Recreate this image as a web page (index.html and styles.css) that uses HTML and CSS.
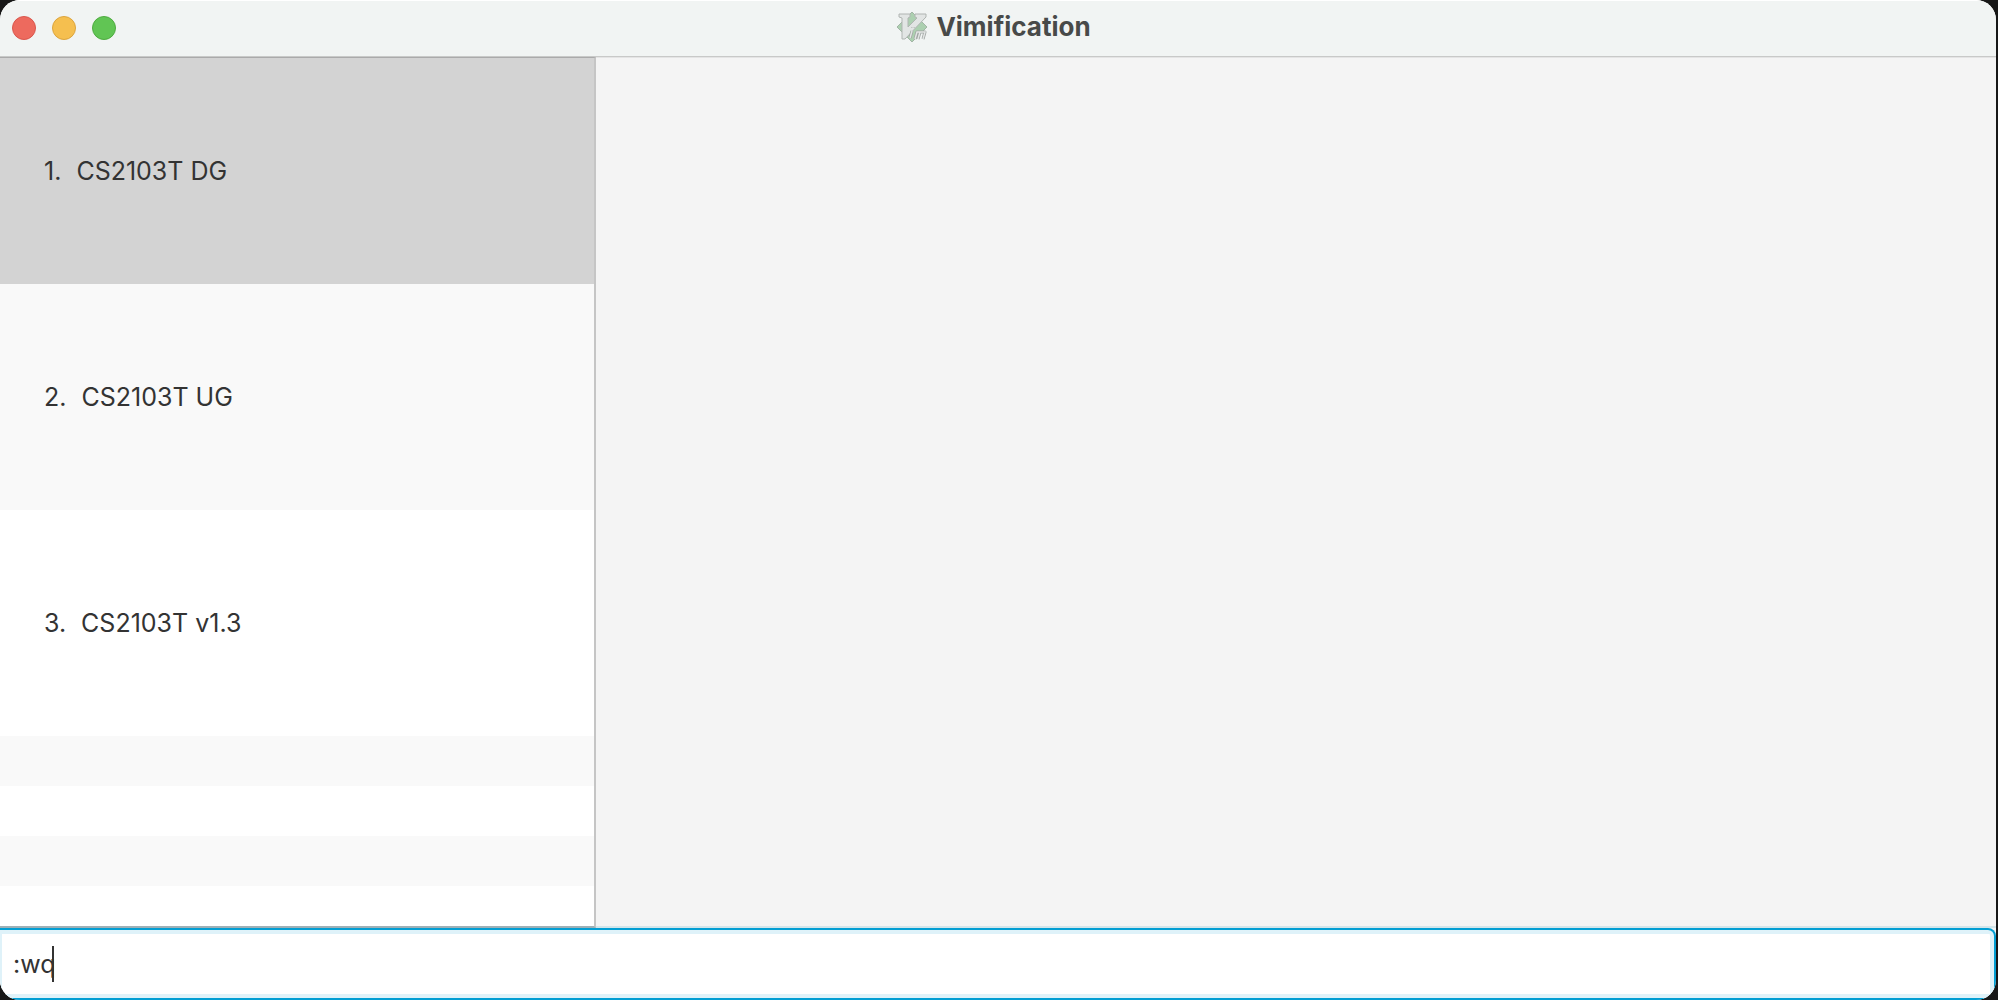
FILE: index.html
```
<!DOCTYPE html>
<html lang="en">
<head>
<meta charset="utf-8">
<title>Vimification</title>
<link rel="stylesheet" href="styles.css">
</head>
<body>
<div class="window">
  <header class="titlebar">
    <div class="controls">
      <button class="control close" type="button" aria-label="Close"></button>
      <button class="control minimize" type="button" aria-label="Minimize"></button>
      <button class="control zoom" type="button" aria-label="Zoom"></button>
    </div>
    <h1 class="title">
      <svg class="logo" viewBox="0 0 30 30" aria-hidden="true">
        <path d="M15 0 30 15 15 30 0 15Z" fill="#acd0b0" stroke="#a3b5a6"/>
        <path d="M2 2h11v3l-2 1v9l9-9-2-1V2h11v3L8 27H5V6L2 5Z" fill="#e2e5e4" stroke="#b0b5b2" stroke-linejoin="round"/>
        <g fill="none" stroke="#a0a6a3" stroke-width="3" stroke-linejoin="round">
          <path d="M15 19l-2 7M18 27l2-7h3l-2 7M23 20h5l-2 7M16 15v1"/>
        </g>
        <g fill="none" stroke="#e2e5e4" stroke-width="1.5">
          <path d="M15 19l-2 7M18 27l2-7h3l-2 7M23 20h5l-2 7M16 15v1"/>
        </g>
      </svg>
      <span>Vimification</span>
    </h1>
  </header>
  <main class="content">
    <ol class="tasks">
      <li class="task selected"><span>1.</span><span>CS2103T DG</span></li>
      <li class="task"><span>2.</span><span>CS2103T UG</span></li>
      <li class="task"><span>3.</span><span>CS2103T v1.3</span></li>
      <li class="blank"></li>
      <li class="blank"></li>
      <li class="blank"></li>
      <li class="blank"></li>
    </ol>
    <section class="detail" aria-label="Task details"></section>
  </main>
  <form class="command">
    <input class="command-input" type="text" value=":wq" aria-label="Command" autocomplete="off" spellcheck="false">
    <span class="caret"></span>
  </form>
</div>
</body>
</html>
```
FILE: styles.css
```
* {
  box-sizing: border-box;
}

body {
  margin: 0;
  padding-right: 2px;
  background: #171717;
  color: #333;
  font-family: Inter, "Liberation Sans", sans-serif;
  font-size: 25px;
}

.window {
  display: flex;
  flex-direction: column;
  height: 100vh;
  overflow: hidden;
  border-radius: 20px;
  background: #f4f4f4;
}

.titlebar {
  display: grid;
  grid-template-columns: 1fr auto 1fr;
  align-items: center;
  flex: none;
  height: 57px;
  padding: 0 12px 2px;
  border-top: 1px solid #fff;
  border-bottom: 1px solid #c8c9c8;
  background: #f1f4f3;
}

.controls {
  display: flex;
  gap: 16px;
}

.control {
  width: 24px;
  height: 24px;
  padding: 0;
  border: 1px solid;
  border-radius: 50%;
}

.close {
  border-color: #d9574d;
  background: #ed6a5e;
}

.minimize {
  border-color: #dba43e;
  background: #f5bf4f;
}

.zoom {
  border-color: #4fab40;
  background: #61c554;
}

.title {
  display: flex;
  align-items: center;
  gap: 9px;
  margin: 0;
  padding: 0 8px 2px 0;
  color: #484a49;
  font-size: 26px;
  font-weight: 700;
  line-height: 32px;
}

.logo {
  width: 30px;
  height: 30px;
}

.content {
  display: flex;
  flex: 1;
  min-height: 0;
}

.tasks {
  flex: none;
  width: 596px;
  margin: 0;
  padding: 0;
  overflow: hidden;
  border: solid #c5c5c5;
  border-width: 1px 2px 2px 0;
  border-top-color: #aaa;
  border-bottom-color: #9fb0b6;
  background: #fff;
  list-style: none;
}

.task {
  display: flex;
  align-items: center;
  gap: 15px;
  height: 226px;
  padding-left: 44px;
}

.blank {
  height: 50px;
}

.tasks li:nth-child(even) {
  background: #f9f9f9;
}

.tasks .selected {
  background: #d3d3d3;
}

.detail {
  flex: 1;
  border-top: 1px solid #e4e4e4;
  border-bottom: 2px solid #d3e5ea;
}

.command {
  position: relative;
  flex: none;
  height: 72px;
}

.command-input {
  width: 100%;
  height: 100%;
  padding: 0 13px;
  border: 2px solid #039ed3;
  border-left-width: 0;
  border-radius: 0 8px 0 0;
  outline: none;
  background: #fff;
  box-shadow: inset -4px 0 #dff2f9, inset 2px 4px #dff2f9, inset 0 -4px #dff2f9;
  color: #333;
  font: inherit;
  caret-color: transparent;
}

.caret {
  position: absolute;
  top: 18px;
  left: 52px;
  width: 2px;
  height: 36px;
  background: #333;
}
```
